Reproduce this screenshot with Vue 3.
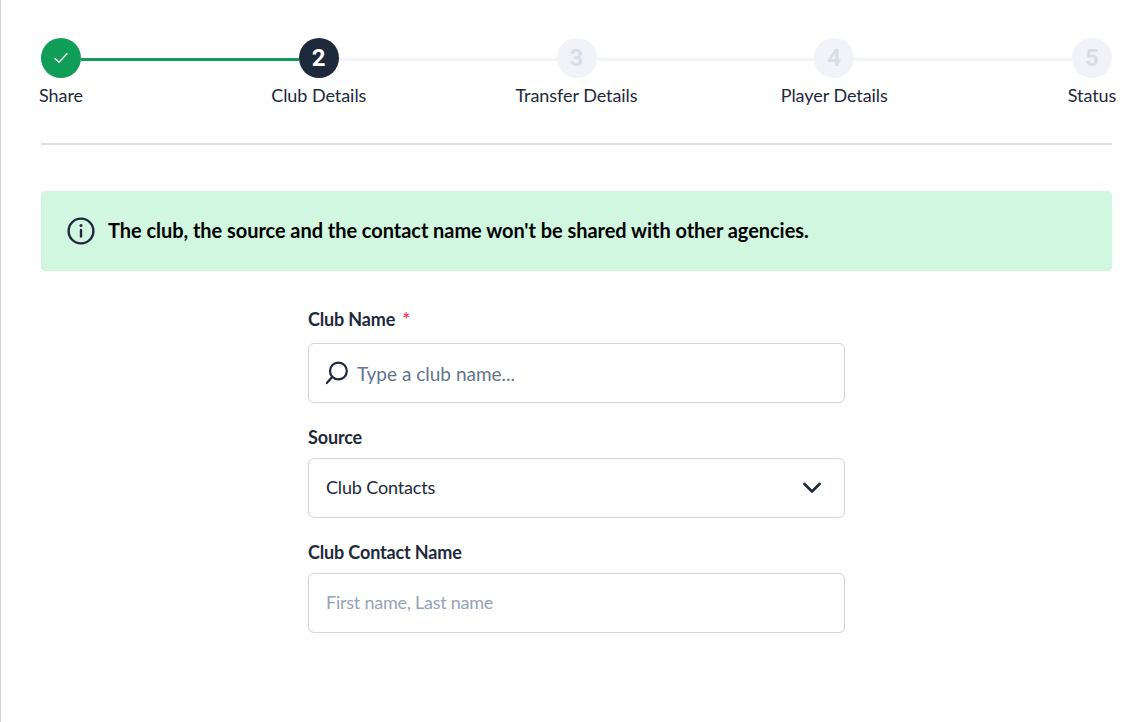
<script setup>
const steps = [
  { n: 1, label: 'Share', state: 'done' },
  { n: 2, label: 'Club Details', state: 'active' },
  { n: 3, label: 'Transfer Details', state: 'todo' },
  { n: 4, label: 'Player Details', state: 'todo' },
  { n: 5, label: 'Status', state: 'todo' },
]
</script>

<template>
  <div class="page">
    <div class="stepper">
      <template v-for="(s, i) in steps" :key="s.n">
        <div class="step">
          <div class="circle" :class="s.state">
            <svg v-if="s.state === 'done'" width="16" height="16" viewBox="0 0 16 16" fill="none">
              <path d="M2 8.6 L6 12.3 L14 3.8" stroke="#fff" stroke-width="1.4" stroke-linecap="round" stroke-linejoin="round" />
            </svg>
            <span v-else>{{ s.n }}</span>
          </div>
          <div class="label">{{ s.label }}</div>
        </div>
        <div v-if="i < steps.length - 1" class="line" :class="{ green: i === 0 }"></div>
      </template>
    </div>
    <div class="divider"></div>
    <div class="alert">
      <svg width="28" height="28" viewBox="0 0 28 28" fill="none">
        <circle cx="14" cy="14" r="12.4" stroke="#1e293b" stroke-width="2.4" />
        <path d="M14 13v6.5" stroke="#1e293b" stroke-width="2.4" stroke-linecap="round" />
        <circle cx="14" cy="8.6" r="1.5" fill="#1e293b" />
      </svg>
      <span class="alert-text">The club, the source and the contact name won't be shared with other agencies.</span>
    </div>
    <form class="form">
      <div class="field first">
        <label class="flabel">Club Name <span class="req">*</span></label>
        <div class="box">
          <svg class="search" width="24" height="24" viewBox="0 0 24 24" fill="none">
            <circle cx="12.4" cy="10" r="8.4" stroke="#1e293b" stroke-width="2.2" />
            <path d="M6.2 16 L0.8 22" stroke="#1e293b" stroke-width="2.2" stroke-linecap="round" />
          </svg>
          <input class="search-input" type="text" placeholder="Type a club name..." />
        </div>
      </div>
      <div class="field">
        <label class="flabel">Source</label>
        <div class="box select">
          <span class="select-value">Club Contacts</span>
          <svg width="18" height="12" viewBox="0 0 18 12" fill="none">
            <path d="M1.5 2 L9 9.5 L16.5 2" stroke="#1e293b" stroke-width="2.6" stroke-linecap="round" stroke-linejoin="round" />
          </svg>
        </div>
      </div>
      <div class="field">
        <label class="flabel">Club Contact Name</label>
        <div class="box">
          <input class="plain-input" type="text" placeholder="First name, Last name" />
        </div>
      </div>
    </form>
  </div>
</template>

<style>
html, body { margin: 0; background: #fff; }
</style>

<style scoped>
.page {
  box-sizing: border-box;
  width: 1148px;
  height: 722px;
  overflow: hidden;
  padding: 38px 36px 0 40px;
  border-left: 1px solid #cbd0e0;
  font-family: Lato, "Liberation Sans", sans-serif;
  color: #1e293b;
  background: #fff;
}
.stepper {
  display: flex;
  align-items: flex-start;
  height: 68px;
}
.step {
  width: 40px;
  flex: none;
  display: flex;
  flex-direction: column;
  align-items: center;
}
.circle {
  width: 40px;
  height: 40px;
  border-radius: 50%;
  display: flex;
  align-items: center;
  justify-content: center;
  font-family: Roboto, Inter, sans-serif;
  font-size: 24px;
  font-weight: 700;
}
.circle.done { background: #0f9d58; }
.circle.active { background: #1e293b; color: #fff; }
.circle.todo { background: #f1f3f8; color: #d9dde6; }
.label {
  margin-top: 7px;
  font-size: 18px;
  line-height: 20px;
  letter-spacing: -0.05px;
  white-space: nowrap;
}
.line {
  flex: 1;
  height: 3px;
  margin-top: 20px;
  background: #f1f4f9;
}
.line.green { background: #0f9d58; }
.divider {
  height: 2px;
  margin-top: 37px;
  background: #dddfe2;
}
.alert {
  height: 80px;
  margin-top: 46px;
  padding-left: 26px;
  box-sizing: border-box;
  display: flex;
  align-items: center;
  gap: 13px;
  background: #d1f7e0;
  border-radius: 4px;
  color: #000;
  font-size: 20px;
  font-weight: 700;
  letter-spacing: -0.05px;
}
.alert-text { margin-bottom: 2px; }
.form {
  width: 537px;
  margin: 37px auto 0;
  display: flex;
  flex-direction: column;
  gap: 23px;
}
.field {
  display: flex;
  flex-direction: column;
  gap: 10px;
}
.field.first { gap: 13px; }
.flabel {
  font-size: 18px;
  line-height: 22px;
  font-weight: 700;
  letter-spacing: -0.15px;
}
.req { color: #f43f5e; margin-left: 3px; font-weight: 700; }
.box {
  box-sizing: border-box;
  height: 60px;
  border: 1px solid #cfd4de;
  border-radius: 6px;
  display: flex;
  align-items: center;
  padding: 0 17px;
  background: #fff;
}
.select {
  justify-content: space-between;
  padding-right: 23px;
  font-size: 18px;
  letter-spacing: -0.15px;
}
.select-value { margin-bottom: 2px; }
.search { flex: none; margin-right: 7px; }
input {
  border: 0;
  outline: 0;
  flex: 1;
  padding: 0;
  font-family: inherit;
  background: transparent;
}
.search-input { font-size: 19px; margin-top: 1px; }
.search-input::placeholder { color: #64748b; opacity: 1; }
.plain-input { font-size: 18px; letter-spacing: -0.24px; margin-bottom: 2px; }
.plain-input::placeholder { color: #94a3b8; opacity: 1; }
</style>
